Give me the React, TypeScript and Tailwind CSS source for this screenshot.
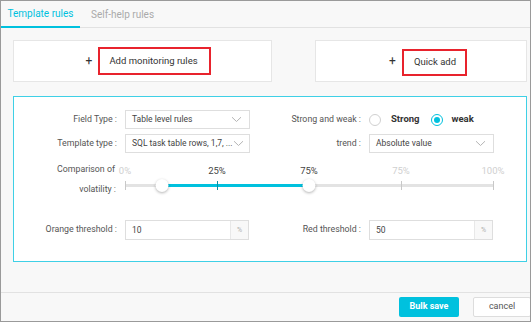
import React from "react";

const font = { fontFamily: "Roboto, 'Liberation Sans', sans-serif" };

const Chevron = () => (
    <svg width="11" height="7" viewBox="0 0 11 7" className="shrink-0">
        <path d="M1 1.2 L5.5 5.5 L10 1.2" fill="none" stroke="#b5b5b5" strokeWidth="1" />
    </svg>
);

const Select = ({ value }: { value: string }) => (
    <div className="w-[125px] h-[19px] border border-[#dedede] bg-white flex items-center justify-between pl-[6px] pr-[7px] text-[8.5px] text-[#444]">
        <span className="whitespace-nowrap">{value}</span>
        <Chevron />
    </div>
);

const Radio = ({ checked }: { checked?: boolean }) => (
    <span
        className={`w-[12px] h-[12px] rounded-full border flex items-center justify-center bg-white ${checked ? "border-[#00c1de]" : "border-[#d0d0d0]"}`}
    >
        {checked && <span className="w-[6px] h-[6px] rounded-full bg-[#00c1de]" />}
    </span>
);

const PercentInput = ({ value }: { value: string }) => (
    <div className="w-[124px] h-[20px] border border-[#dedede] bg-white flex text-[8.5px]">
        <span className="flex-1 flex items-center pl-[6px] text-[#444]">{value}</span>
        <span className="w-[18px] border-l border-[#e8e8e8] bg-[#f8f8f8] flex items-center justify-center text-[7px] text-[#b0b0b0]">%</span>
    </div>
);

const Slider = () => {
    const marks = [
        { at: 0, label: "0%", dark: false },
        { at: 25, label: "25%", dark: true },
        { at: 50, label: "75%", dark: true },
        { at: 75, label: "75%", dark: false },
        { at: 100, label: "100%", dark: false },
    ];
    return (
        <div className="relative w-[368px] h-[32px]">
            {marks.map((m) => (
                <span
                    key={m.at}
                    className={`absolute top-[1px] -translate-x-1/2 text-[9.5px] ${m.dark ? "text-[#444]" : "text-[#cfcfcf]"}`}
                    style={{ left: `${m.at}%` }}
                >
                    {m.label}
                </span>
            ))}
            <div className="absolute left-0 right-0 top-[21px] h-[3px] bg-[#e3e3e3]" />
            <div className="absolute top-[21px] h-[3px] bg-[#00c1de]" style={{ left: "10%", width: "40%" }} />
            {[0, 25, 75, 100].map((t) => (
                <span
                    key={t}
                    className={`absolute top-[18px] w-[1px] h-[9px] ${t === 25 ? "bg-[#0a8ea3]" : "bg-[#c8c8c8]"}`}
                    style={{ left: `${t}%` }}
                />
            ))}
            {[10, 50].map((h) => (
                <span
                    key={h}
                    className="absolute top-[16px] w-[13px] h-[13px] -translate-x-1/2 rounded-full bg-white shadow-[0_1px_3px_rgba(0,0,0,0.3)]"
                    style={{ left: `${h}%` }}
                />
            ))}
        </div>
    );
};

export default function App() {
    return (
        <div style={font} className="w-[531px] h-[322px] border border-[#9a9a9a] bg-[#f8f8f8] flex flex-col overflow-hidden">
            {/* Tabs */}
            <div className="h-[27px] shrink-0 border-b border-[#e2e2e2] flex items-stretch text-[10px]">
                <div className="w-[79px] flex items-center justify-center text-[#00c1de] border-b-2 border-[#00c1de] -mb-px">
                    Template rules
                </div>
                <div className="ml-[11px] flex items-center text-[#aaa]">Self-help rules</div>
            </div>

            <div className="pl-[12px] pt-[12px] flex-1">
                {/* Add cards */}
                <div className="flex gap-[43px] h-[42px]">
                    <div className="w-[259px] border border-[#e6e6e6] bg-white flex items-center justify-center text-[9.5px] text-[#333]">
                        <span className="mr-[6px] text-[12px] ml-[12px]">+</span>
                        <span className="border-2 border-[#e8232d] h-[28px] w-[113px] pl-[9px] flex items-center">Add monitoring rules</span>
                    </div>
                    <div className="w-[212px] border border-[#e6e6e6] bg-white flex items-center justify-center text-[9.5px] text-[#333]">
                        <span className="mr-[6px] text-[12px] ml-[14px]">+</span>
                        <span className="border-2 border-[#e8232d] h-[27px] w-[65px] pl-[10px] flex items-center mt-[3px]">Quick add</span>
                    </div>
                </div>

                {/* Config panel */}
                <div className="mt-[14px] w-[514px] h-[166px] border border-[#3fd0e6] bg-white pt-[13px] text-[8.8px] text-[#555]">
                    <div className="flex">
                        <div className="w-[243px] flex flex-col gap-[5px]">
                            <div className="flex items-center">
                                <span className="w-[111px] text-right pr-[8px]">Field Type :</span>
                                <Select value="Table level rules" />
                            </div>
                            <div className="flex items-center">
                                <span className="w-[111px] text-right pr-[8px]">Template type :</span>
                                <Select value="SQL task table rows, 1,7, ..." />
                            </div>
                        </div>
                        <div className="flex flex-col gap-[5px]">
                            <div className="flex items-center h-[19px]">
                                <span className="w-[112px] text-right pr-[8px]">Strong and weak :</span>
                                <Radio />
                                <span className="ml-[10px] mr-[11px] font-bold text-[#333] text-[9.5px]">Strong</span>
                                <Radio checked />
                                <span className="ml-[9px] font-bold text-[#333] text-[9.5px]">weak</span>
                            </div>
                            <div className="flex items-center">
                                <span className="w-[112px] text-right pr-[8px]">trend :</span>
                                <Select value="Absolute value" />
                            </div>
                        </div>
                    </div>

                    <div className="flex mt-[10px]">
                        <div className="w-[111px] flex flex-col items-end pr-[6px] leading-[12px]">
                            <span className="mr-[4px]">Comparison of</span>
                            <span className="mt-[8px] pr-[3px]">volatility :</span>
                        </div>
                        <Slider />
                    </div>

                    <div className="flex mt-[25px]">
                        <div className="w-[243px] flex items-center">
                            <span className="w-[111px] text-right pr-[8px]">Orange threshold :</span>
                            <PercentInput value="10" />
                        </div>
                        <div className="flex items-center">
                            <span className="w-[112px] text-right pr-[8px]">Red threshold :</span>
                            <PercentInput value="50" />
                        </div>
                    </div>
                </div>
            </div>

            {/* Footer */}
            <div className="h-[29px] shrink-0 border-t border-[#e2e2e2] flex items-center justify-end gap-[14px] text-[9px]">
                <button className="w-[60px] h-[20px] rounded-[2px] bg-[#00c1de] text-white font-bold">Bulk save</button>
                <button className="w-[58px] h-[20px] rounded-[2px] bg-white border border-[#ddd] text-[#555] -mr-px">cancel</button>
            </div>
        </div>
    );
}
